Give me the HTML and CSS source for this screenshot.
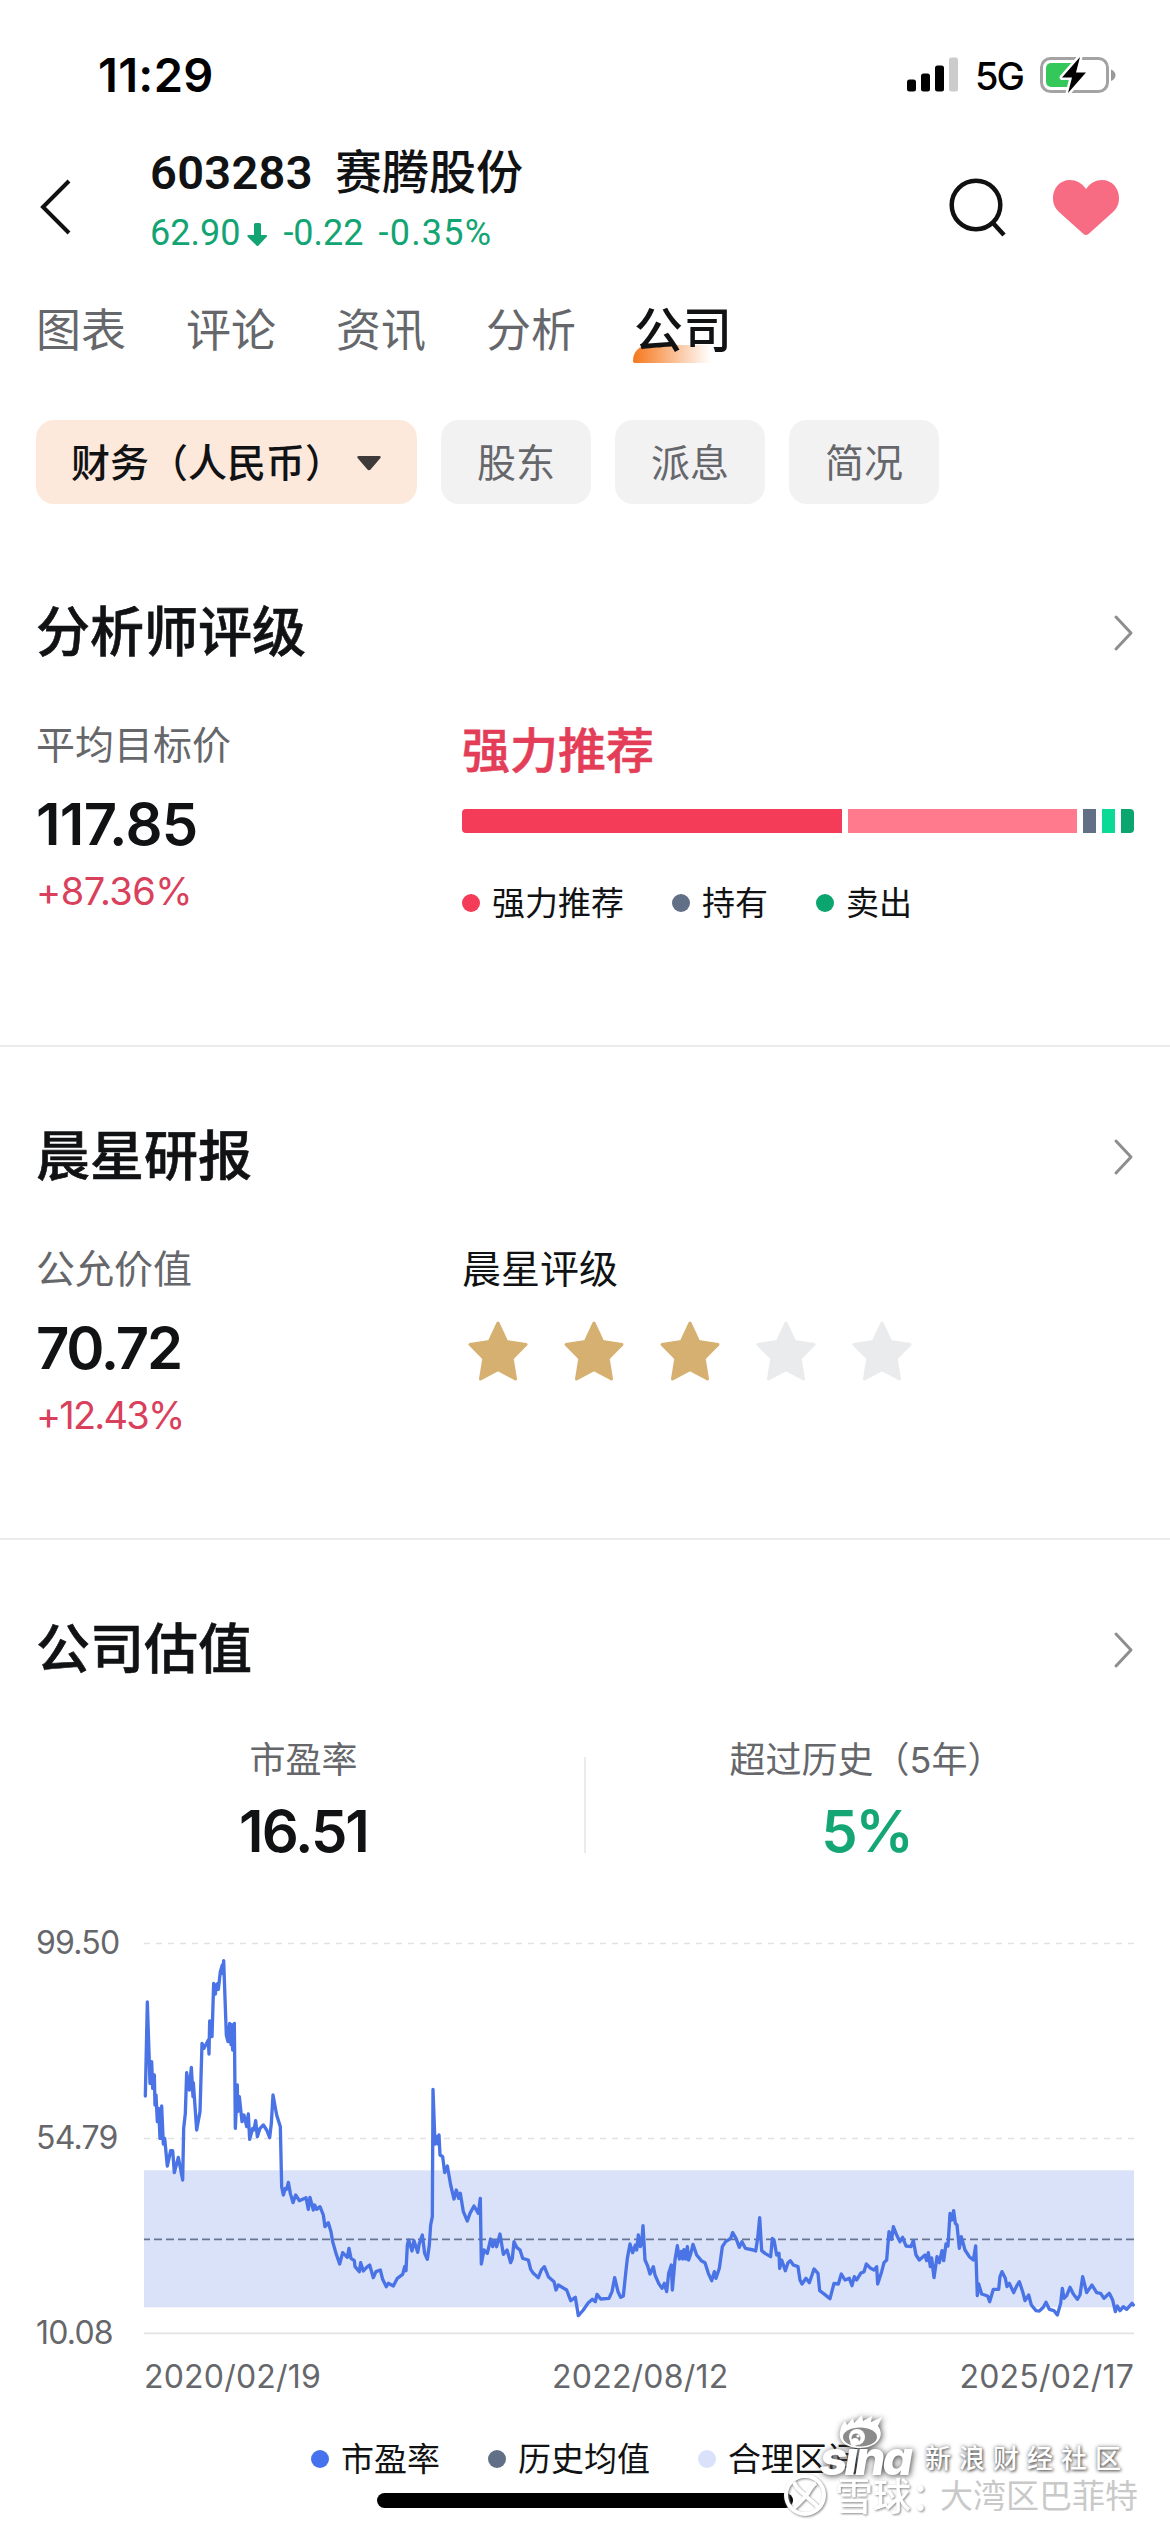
FILE: index.html
```html
<!DOCTYPE html>
<html lang="zh-CN">
<head>
<meta charset="utf-8">
<title>603283 赛腾股份</title>
<link rel="stylesheet" href="styles.css">
</head>
<body>
<main class="screen">
  <div class="status">
    <span class="clock">11:29</span>
    <div class="status-icons">
      <svg class="signal" width="51" height="35" viewBox="0 0 51 35">
        <rect x="0" y="22.500" width="9" height="12" rx="2.500"/>
        <rect x="14" y="16.500" width="9" height="18" rx="2.500"/>
        <rect x="28" y="8.500" width="9" height="26" rx="2.500"/>
        <rect x="42" y="0.500" width="9" height="34" rx="2.500" fill="#ccc"/>
      </svg>
      <span class="network">5G</span>
      <svg class="battery" width="76" height="38" viewBox="0 0 76 38">
        <rect x="1.500" y="2.500" width="66" height="33" rx="9" fill="none" stroke="#a3a3a3" stroke-width="3"/>
        <path d="M71 13.500C77 16 77 22.500 71 25Z" fill="#999"/>
        <rect x="6" y="7" width="29" height="24" rx="5" fill="#34c759"/>
        <path d="M40 1L22 21.500H32L28 37L46 16.500H36Z" fill="#000" stroke="#fff" stroke-width="5" stroke-linejoin="round" paint-order="stroke"/>
      </svg>
    </div>
  </div>

  <header class="header">
    <svg class="back" width="34" height="56" viewBox="0 0 34 56"><path d="M32 2L6 28L32 54" transform="translate(-3 0)" fill="none" stroke="#111" stroke-width="4"/></svg>
    <div class="stock">
      <h1 class="stock-name"><span class="code">603283</span>赛腾股份</h1>
      <p class="quote"><span>62.90</span><svg class="down" width="20" height="24" viewBox="0 0 20 24"><path d="M7 1.500Q7 0 8.500 0H12.500Q14 0 14 1.500V12H19Q21 12 19.500 14L11.500 22.500Q10.500 23.500 9.500 22.500L0.800 14Q-0.500 12 1.500 12H7Z" fill="#12a472"/></svg><span>-0.22</span><span class="percent">-0.35%</span></p>
    </div>
    <svg class="search" width="60" height="60" viewBox="0 0 60 60"><circle cx="28" cy="28" r="24.300" fill="none" stroke="#111" stroke-width="4.500"/><path d="M45 46L56 58" stroke="#111" stroke-width="4.500"/></svg>
    <svg class="heart" width="66" height="55" viewBox="0 0 66 55"><path d="M33 9C37 3 43 0 49 0C59 0 66 8 66 18C66 24 64 28 60 32L35.500 54Q33 56 30.500 54L6 32C2 28 0 24 0 18C0 8 7 0 17 0C23 0 29 3 33 9Z" fill="#f76c82"/></svg>
  </header>

  <nav class="tabs">
    <span>图表</span><span>评论</span><span>资讯</span><span>分析</span><span class="tab-active">公司</span>
  </nav>

  <div class="filters">
    <span class="pill pill-active">财务（人民币）<svg width="24" height="15" viewBox="0 0 24 15"><path d="M2 0H22Q25 0 23 2.500L14 13Q12 15.500 10 13L1 2.500Q-1 0 2 0Z" fill="#3d3a39"/></svg></span>
    <span class="pill">股东</span><span class="pill">派息</span><span class="pill">简况</span>
  </div>

  <section class="section analyst">
    <div class="section-head"><h2>分析师评级</h2><svg class="more" width="20" height="36" viewBox="0 0 20 36"><path d="M2 2L17 18L2 34" fill="none" stroke="#8e8e8e" stroke-width="3" stroke-linecap="round" stroke-linejoin="round"/></svg></div>
    <div class="columns">
      <div class="summary">
        <p class="label">平均目标价</p>
        <p class="value value-target">117.85</p>
        <p class="change">+87.36%</p>
      </div>
      <div class="detail">
        <p class="verdict">强力推荐</p>
        <div class="rating-bar"><i class="strong"></i><i class="buy"></i><i class="hold"></i><i class="reduce"></i><i class="sell"></i></div>
        <div class="legend"><span><i class="dot strong"></i>强力推荐</span><span><i class="dot hold"></i>持有</span><span><i class="dot sell"></i>卖出</span></div>
      </div>
    </div>
  </section>

  <section class="section morningstar">
    <div class="section-head"><h2>晨星研报</h2><svg class="more" width="20" height="36" viewBox="0 0 20 36"><path d="M2 2L17 18L2 34" fill="none" stroke="#8e8e8e" stroke-width="3" stroke-linecap="round" stroke-linejoin="round"/></svg></div>
    <div class="columns">
      <div class="summary">
        <p class="label">公允价值</p>
        <p class="value">70.72</p>
        <p class="change change-fair">+12.43%</p>
      </div>
      <div class="detail">
        <p class="label label-dark">晨星评级</p>
        <div class="stars">
          <svg class="star" viewBox="0 0 60 60"><path d="M30 2L38.600 20.500L58 23.500L44.200 37.500L47.500 58L30 48.700L12.500 58L15.800 37.500L2 23.500L21.400 20.500Z"/></svg>
          <svg class="star" viewBox="0 0 60 60"><path d="M30 2L38.600 20.500L58 23.500L44.200 37.500L47.500 58L30 48.700L12.500 58L15.800 37.500L2 23.500L21.400 20.500Z"/></svg>
          <svg class="star" viewBox="0 0 60 60"><path d="M30 2L38.600 20.500L58 23.500L44.200 37.500L47.500 58L30 48.700L12.500 58L15.800 37.500L2 23.500L21.400 20.500Z"/></svg>
          <svg class="star star-empty" viewBox="0 0 60 60"><path d="M30 2L38.600 20.500L58 23.500L44.200 37.500L47.500 58L30 48.700L12.500 58L15.800 37.500L2 23.500L21.400 20.500Z"/></svg>
          <svg class="star star-empty" viewBox="0 0 60 60"><path d="M30 2L38.600 20.500L58 23.500L44.200 37.500L47.500 58L30 48.700L12.500 58L15.800 37.500L2 23.500L21.400 20.500Z"/></svg>
        </div>
      </div>
    </div>
  </section>

  <section class="section valuation">
    <div class="section-head"><h2>公司估值</h2><svg class="more" width="20" height="36" viewBox="0 0 20 36"><path d="M2 2L17 18L2 34" fill="none" stroke="#8e8e8e" stroke-width="3" stroke-linecap="round" stroke-linejoin="round"/></svg></div>
    <div class="stats">
      <div class="stat"><p class="stat-label">市盈率</p><p class="stat-value">16.51</p></div>
      <i class="stat-rule"></i>
      <div class="stat"><p class="stat-label">超过历史（5年）</p><p class="stat-value up">5%</p></div>
    </div>
    <div class="chart">
      <div class="y-axis"><span>99.50</span><span>54.79</span><span>10.08</span></div>
      <svg class="plot" viewBox="0 0 2970 1170">
        <rect x="0" y="682" width="2970" height="411" fill="#dae2fa"/>
        <path d="M0 1.500H2970M0 586.500H2970" stroke="#e1e1e3" stroke-width="4" stroke-dasharray="18 18"/>
        <path d="M0 1171H2970" stroke="#e3e3e5" stroke-width="5"/>
        <path d="M0 889H2970" stroke="#67748f" stroke-width="5" stroke-dasharray="24 12" stroke-dashoffset="6"/>
        <polyline fill="none" stroke="#4a74e6" stroke-width="10" stroke-linejoin="round" stroke-linecap="round" points="4,459 10,177 18,421 23,356 26,436 31,396 33,486 36,456 40,536 44,496 48,586 50,510 51,586 53,489 58,603 62,586 70,669 80,623 86,623 91,689 103,643 116,711 119,556 124,511 128,389 136,441 142,373 147,461 148,419 158,561 168,506 174,301 180,316 193,291 195,333 197,234 204,281 209,121 214,153 217,125 219,140 221,121 223,139 229,86 235,66 237,92 239,53 247,276 252,296 257,241 261,305 263,245 266,321 271,241 274,556 280,426 281,506 286,461 294,536 300,516 308,551 313,513 317,589 326,556 330,561 335,533 340,581 348,556 358,546 368,561 377,584 382,541 387,456 398,516 409,551 413,731 418,756 424,736 428,739 433,718 439,751 447,779 455,756 466,773 486,764 493,799 498,763 508,801 512,786 518,799 528,791 538,816 543,851 553,839 561,866 566,896 576,931 587,963 596,929 610,943 615,916 621,946 631,953 633,971 646,986 650,959 658,984 668,973 677,966 688,1004 696,986 709,981 716,1009 727,1031 733,1021 748,1029 760,1006 776,994 782,971 786,983 790,906 794,891 804,924 810,893 821,928 826,901 835,876 842,931 850,949 856,906 860,846 865,821 867,439 873,603 879,581 882,603 885,576 888,636 896,641 902,689 910,669 920,726 930,768 937,741 944,766 949,751 958,806 970,834 978,811 990,789 1003,811 1009,766 1012,963 1020,921 1030,931 1040,888 1046,911 1052,893 1058,911 1068,873 1078,934 1089,921 1100,959 1105,946 1110,896 1118,913 1128,921 1136,946 1153,951 1160,979 1168,991 1183,1004 1192,981 1201,971 1213,1001 1230,1016 1236,1041 1243,1026 1268,1041 1280,1073 1294,1063 1303,1118 1318,1101 1333,1079 1345,1069 1354,1076 1359,1054 1370,1068 1395,1066 1404,1046 1412,1004 1422,1046 1430,1063 1438,1059 1445,991 1450,946 1458,903 1466,929 1474,906 1478,921 1483,876 1489,911 1493,901 1497,848 1503,951 1511,969 1518,993 1528,971 1533,996 1544,1021 1554,1036 1561,1021 1568,1046 1574,991 1582,966 1585,1041 1593,951 1600,908 1606,948 1612,925 1616,948 1620,920 1625,948 1630,911 1634,951 1640,933 1647,904 1658,936 1672,953 1683,959 1693,991 1703,1013 1711,986 1716,1006 1726,976 1735,911 1745,896 1760,886 1766,869 1776,886 1786,913 1794,896 1804,916 1828,921 1835,924 1841,886 1847,824 1853,923 1863,931 1880,941 1885,886 1890,891 1898,936 1905,931 1907,976 1913,951 1924,983 1932,959 1939,953 1948,966 1962,971 1968,1011 1974,1023 1986,1006 1996,1019 2004,996 2010,978 2022,991 2027,1043 2038,1051 2058,1067 2070,1021 2083,1023 2092,993 2103,1011 2116,1006 2124,1028 2131,1001 2138,1011 2150,991 2160,986 2167,963 2180,976 2190,981 2198,971 2201,1023 2213,986 2220,959 2228,951 2235,866 2243,889 2248,851 2258,876 2268,896 2276,883 2286,909 2301,911 2308,893 2316,936 2326,951 2343,936 2348,953 2353,929 2359,971 2363,945 2370,1004 2379,941 2386,959 2394,923 2399,953 2406,903 2412,909 2418,811 2424,831 2429,803 2434,841 2439,846 2446,916 2452,881 2463,921 2476,941 2488,951 2495,909 2500,1058 2504,1023 2513,1053 2531,1059 2537,1076 2548,1039 2564,1039 2568,1001 2574,986 2584,1006 2589,1031 2596,1021 2609,1049 2618,1029 2626,1016 2636,1046 2643,1073 2654,1056 2662,1086 2676,1103 2686,1104 2698,1093 2706,1078 2716,1099 2730,1103 2740,1116 2750,1081 2755,1036 2760,1066 2768,1058 2778,1033 2788,1053 2800,1069 2808,1056 2816,1001 2828,1049 2844,1026 2858,1049 2870,1051 2880,1066 2896,1051 2906,1071 2914,1106 2920,1089 2928,1103 2938,1091 2948,1099 2964,1081 2968,1086"/>
      </svg>
      <div class="x-axis"><span>2020/02/19</span><span>2022/08/12</span><span>2025/02/17</span></div>
    </div>
    <div class="legend chart-legend"><span><i class="dot ratio"></i>市盈率</span><span><i class="dot hold"></i>历史均值</span><span><i class="dot range"></i>合理区间</span></div>
  </section>

  <div class="home-bar"></div>

  <div class="mark sina">
    <svg class="sina-eye" width="46" height="36" viewBox="0 0 46 36">
      <path d="M2 17Q3 10 7 6L9 10L15 3L16 8L24 0L25 6L34 1L33 7L44 2L40 11C48 22 38 33 22 33C8 33 0 26 2 17Z" fill="#fff"/>
      <ellipse cx="22" cy="22" rx="17" ry="9.500" fill="#8b8b8b"/>
      <circle cx="19" cy="22" r="8" fill="#fff"/><circle cx="18" cy="23" r="4.500" fill="#888"/><circle cx="20" cy="21" r="1.600" fill="#fff"/>
    </svg>
    <span class="sina-word">sina</span>
  </div>
  <span class="mark community">新浪财经社区</span>
  <div class="mark snowball">
    <svg width="46" height="46" viewBox="0 0 46 46"><g fill="none" stroke="#fff" stroke-width="4"><circle cx="22" cy="22" r="19"/><path d="M11 9C14 18 20 19 23 23C27 28 32 29 35 35M33 10C28 13 27 18 23 23C18 28 16 31 11 35"/></g></svg>
    <span class="snowball-name">雪球：</span>
  </div>
  <span class="mark author">大湾区巴菲特</span>
</main>
</body>
</html>
```

FILE: styles.css
```css
* { box-sizing: border-box; }
body { margin: 0; background: #fff; }
h1, h2, p { margin: 0; font-weight: inherit; }
svg { display: block; flex: none; overflow: visible; }

.screen {
  position: relative;
  width: 1170px;
  height: 2532px;
  overflow: hidden;
  background: #fff;
  color: #111214;
  font-family: Inter, "Noto Sans CJK SC", sans-serif;
}

.status { display: flex; justify-content: space-between; align-items: center; height: 144px; padding: 5px 54px 0 98px; }
.clock { font-size: 47px; font-weight: 600; letter-spacing: 0.300px; color: #000; }
.status-icons { display: flex; align-items: center; color: #000; }
.network { margin: 2px 0 0 17px; width: 49px; font-size: 38px; font-weight: 500; letter-spacing: -2px; }
.battery { margin-left: 16px; }

.header { display: flex; align-items: center; height: 126px; padding: 0 51px 0 40px; }
.stock { align-self: flex-start; margin-left: 76px; width: 798px; font-family: Roboto, "Noto Sans CJK SC", sans-serif; }
.stock-name { display: flex; gap: 22px; font-size: 47px; line-height: 58px; font-weight: 500; white-space: nowrap; }
.code { font-weight: 600; letter-spacing: 0.300px; }
.quote { display: flex; align-items: center; margin-top: 7px; font-size: 36px; line-height: 48px; color: #12a472; }
.down { margin: 3px 16px 0 7px; }
.percent { margin-left: 15px; letter-spacing: 1.200px; }
.heart { margin-left: auto; }

.tabs { display: flex; align-items: center; gap: 60px; height: 120px; padding: 2px 0 0 36px; font-size: 45px; line-height: 66px; color: #66676b; }
.tab-active { position: relative; z-index: 0; margin-left: -2px; font-size: 49px; font-weight: 500; color: #111214; }
.tab-active::before {
  content: "";
  position: absolute;
  z-index: -1;
  left: -1px;
  bottom: 1px;
  width: 78px;
  height: 18px;
  border-radius: 18px 0 0 3px;
  background: linear-gradient(90deg, #f5771c, #fff);
}

.filters { display: flex; gap: 24px; margin-top: 30px; padding-left: 36px; }
.pill { display: flex; align-items: center; justify-content: center; width: 150px; height: 84px; border-radius: 18px; background: #f2f2f3; color: #66676b; font-size: 39px; padding-bottom: 5px; }
.pill-active { justify-content: flex-start; width: 381px; padding-left: 35px; background: #fde9dc; color: #111214; font-weight: 500; }
.pill-active svg { margin: 7px 0 0 13px; }

.section { padding: 75px 36px 0; border-top: 2px solid #ebebed; }
.section-head { display: flex; justify-content: space-between; align-items: center; height: 70px; }
.section-head h2 { font-size: 54px; line-height: 70px; font-weight: 500; -webkit-text-stroke: 0.600px #111214; }
.analyst { height: 524px; margin-top: 17px; border-top-color: transparent; }
.morningstar { height: 493px; }

.columns { display: grid; grid-template-columns: 426px 1fr; margin-top: 52px; }
.label { font-size: 39px; line-height: 50px; color: #66676b; }
.label-dark { color: #111214; }
.value { margin-top: 19px; font-size: 58px; line-height: 70px; font-weight: 600; letter-spacing: -2.200px; }
.value-target { letter-spacing: -0.700px; }
.change { margin-top: 9px; font-size: 38px; line-height: 46px; letter-spacing: -0.500px; color: #d9405c; }
.change-fair { letter-spacing: -1.800px; }
.verdict { margin-top: 3px; font-size: 48px; line-height: 56px; font-weight: 500; color: #e33d58; -webkit-text-stroke: 0.600px #e33d58; }

.rating-bar { display: grid; grid-template-columns: 380px 1fr 13px 13px 13px; gap: 6px; height: 24px; margin-top: 30px; border-radius: 4px; overflow: hidden; }
.strong { background: #f43b57; }
.buy { background: #ff7a8d; }
.hold { background: #627087; }
.reduce { background: #0bda96; }
.sell { background: #0ba56f; }

.legend { display: flex; gap: 48px; margin-top: 50px; font-size: 33px; line-height: 40px; }
.legend span { display: flex; align-items: center; }
.dot { width: 18px; height: 18px; margin-right: 12px; border-radius: 50%; }

.stars { display: flex; gap: 36px; margin: 27px 0 0 6px; }
.star { width: 60px; height: 60px; fill: #d6b070; stroke: #d6b070; stroke-width: 3px; stroke-linejoin: round; }
.star-empty { fill: #e9ebed; stroke: #e9ebed; }

.stats { display: flex; align-items: flex-end; margin: 50px -13px 0; }
.stat { flex: 1; text-align: center; }
.stat-rule { width: 2px; height: 96px; margin-bottom: 10px; background: #ebebed; }
.stat-label { font-size: 36px; line-height: 50px; color: #66676b; }
.stat-value { margin-top: 14px; font-size: 58px; line-height: 64px; font-weight: 600; letter-spacing: -2px; }
.up { color: #14a674; }

.chart { display: grid; grid-template-columns: 108px 990px; margin-top: 80px; color: #66676b; font-size: 32px; line-height: 40px; }
.y-axis { display: flex; flex-direction: column; justify-content: space-between; margin: -20px 0; letter-spacing: -0.800px; }
.plot { width: 990px; height: 390px; }
.x-axis { grid-column: 2; display: flex; justify-content: space-between; margin-top: 24px; letter-spacing: 0.200px; }
.chart-legend { margin: 42px 0 0 275px; }
.ratio { background: #4672ee; }
.range { background: #dae2fb; }

.home-bar { width: 416px; height: 15px; margin: 14px auto 0; border-radius: 8px; background: #000; }

.mark { position: absolute; white-space: nowrap; color: #fff; }
.sina { left: 820px; top: 2415px; filter: drop-shadow(1px 1px 3px #444); }
.sina-eye { margin-left: 18px; }
.sina-word { display: block; margin-top: -17px; font-size: 48px; line-height: 48px; font-weight: 800; font-style: italic; letter-spacing: -3px; }
.community { left: 925px; top: 2441px; font-size: 26px; line-height: 36px; letter-spacing: 8px; font-weight: 500; text-shadow: 1px 1px 3px #555, 0 0 4px #888; }
.snowball { left: 783px; top: 2473px; display: flex; align-items: center; gap: 6px; filter: drop-shadow(1px 1px 1px #888); }
.snowball-name { font-size: 38px; line-height: 46px; font-weight: 500; }
.author { left: 940px; top: 2473px; font-size: 33px; line-height: 46px; color: #c9c9c9; }
```
